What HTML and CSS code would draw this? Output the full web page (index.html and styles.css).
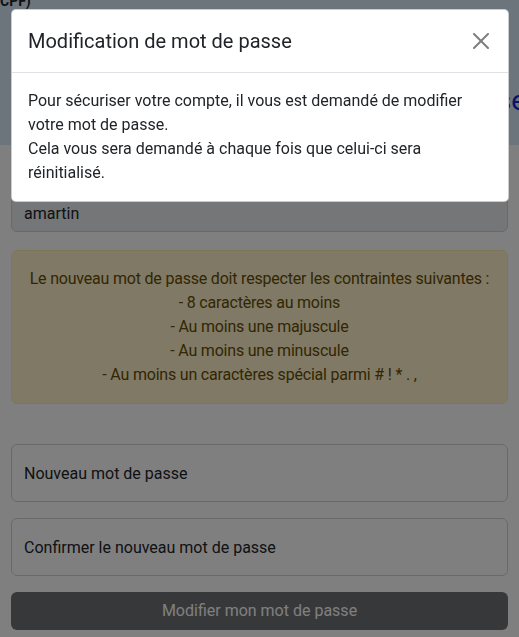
FILE: index.html
```html
<!DOCTYPE html>
<html lang="fr">
<head>
    <meta charset="UTF-8">
    <meta name="viewport" content="width=device-width, initial-scale=1.0">
    <title>Modification de mot de passe</title>
    <link rel="stylesheet" href="styles.css">
</head>
<body>
    <header class="top-band">
        <div class="top-note">CPF)</div>
        <h1 class="page-title">Mot de passe</h1>
    </header>

    <main class="page">
        <form class="pwd-form">
            <label class="field-label" for="login">Identifiant</label>
            <input class="field field-readonly" id="login" type="text" value="amartin" readonly>

            <div class="alert-warning">
                Le nouveau mot de passe doit respecter les contraintes suivantes :<br>
                - 8 caractères au moins<br>
                - Au moins une majuscule<br>
                - Au moins une minuscule<br>
                - Au moins un caractères spécial parmi # ! * . ,
            </div>

            <input class="field field-tall" type="password" placeholder="Nouveau mot de passe">
            <input class="field field-tall" type="password" placeholder="Confirmer le nouveau mot de passe">

            <button class="btn-dark" type="submit" disabled>Modifier mon mot de passe</button>
        </form>
    </main>

    <!-- modal shown on first login -->
    <div class="modal-backdrop"></div>
    <div class="modal">
        <div class="modal-dialog">
            <div class="modal-header">
                <h5 class="modal-title">Modification de mot de passe</h5>
                <button class="btn-close" type="button" aria-label="Fermer">
                    <svg width="16" height="16" viewBox="0 0 16 16"><path d="M.293.293a1 1 0 0 1 1.414 0L8 6.586 14.293.293a1 1 0 1 1 1.414 1.414L9.414 8l6.293 6.293a1 1 0 0 1-1.414 1.414L8 9.414l-6.293 6.293a1 1 0 0 1-1.414-1.414L6.586 8 .293 1.707a1 1 0 0 1 0-1.414z"/></svg>
                </button>
            </div>
            <div class="modal-body">
                Pour sécuriser votre compte, il vous est demandé de modifier<br>
                votre mot de passe.<br>
                Cela vous sera demandé à chaque fois que celui-ci sera<br>
                réinitialisé.
            </div>
        </div>
    </div>
</body>
</html>
```

FILE: styles.css
```css
/* Page */
* { margin: 0; padding: 0; box-sizing: border-box; }
html, body { overflow: hidden; }
body { font-family: "Segoe UI", Roboto, sans-serif; font-size: 16px; line-height: 1.5; color: #212529; background: #fff; }

.top-band { display: flow-root; background: #d9eaf9; height: 145px; }
.top-note { font-size: 14px; font-weight: bold; line-height: 16px; margin-top: -7px; }
.page-title { font-size: 28px; font-weight: 400; color: #1a24d0; text-align: right; white-space: nowrap; margin: 75px -7px 0 0; line-height: 1.2; }

.page { padding: 0 11px; }
.pwd-form { display: flex; flex-direction: column; }
.field-label { height: 49px; padding-top: 12px; }
.field { font: inherit; color: #212529; border: 1px solid #ced4da; border-radius: 6px; padding: 6px 12px; height: 38px; width: 100%; background: #fff; }
.field::placeholder { color: #212529; opacity: 1; }
.field-readonly { background: #e9ecef; }
.field-tall { height: 58px; padding: 16px 12px; margin-bottom: 16px; }

.alert-warning { margin: 18px 0 40px; padding: 16px 6px; border: 1px solid #ffecb5; border-radius: 6px; background: #fff3cd; color: #664d03; text-align: center; letter-spacing: -0.2px; white-space: nowrap; }

.btn-dark { font: inherit; height: 38px; border: none; border-radius: 6px; background: #212529; color: #fff; opacity: .65; }

/* Modal */
.modal-backdrop { position: fixed; inset: 0; background: rgba(0, 0, 0, .5); }
.modal { position: fixed; inset: 0; }
.modal-dialog { margin: 9px 10px 0 11px; background: #fff; border: 1px solid rgba(0, 0, 0, .2); border-radius: 5px; }
.modal-header { display: flex; align-items: center; justify-content: space-between; padding: 16px; border-bottom: 1px solid #dee2e6; }
.modal-title { font-size: 20px; font-weight: 400; line-height: 1.5; }
.btn-close { background: none; border: none; opacity: .5; width: 24px; height: 24px; display: flex; align-items: center; justify-content: center; margin-right: -1px; }
.modal-body { padding: 16px; }
```
